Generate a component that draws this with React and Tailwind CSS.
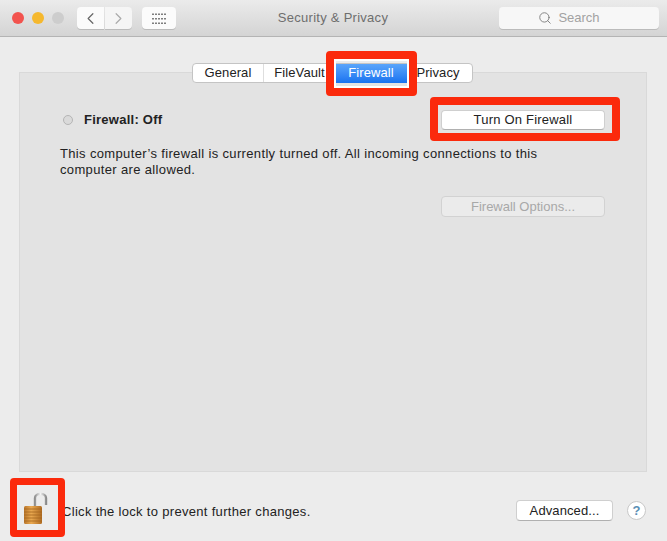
import { ChevronLeft, ChevronRight, Search } from 'lucide-react';

const tabs = ['General', 'FileVault', 'Firewall', 'Privacy'];

// little grid-of-dots icon for the "show all" button
const GridIcon = () => (
  <svg width="15" height="11" viewBox="0 0 15 11" fill="#555">
    {[1, 5.5, 10].map((y) =>
      [1, 4, 7, 10, 13].map((x) => <rect key={`${x}-${y}`} x={x - 0.75} y={y - 0.5} width="1.5" height="1.5" />)
    )}
  </svg>
);

const LockIcon = () => (
  <svg width="26" height="34" viewBox="0 0 26 34" className="mr-[3px]">
    <defs>
      <linearGradient id="shackle" x1="0" x2="1" y1="0" y2="0">
        <stop offset="0" stopColor="#8f8f8f" />
        <stop offset="0.5" stopColor="#f2f2f2" />
        <stop offset="1" stopColor="#8a8a8a" />
      </linearGradient>
      <linearGradient id="body" x1="0" x2="1" y1="0" y2="0">
        <stop offset="0" stopColor="#b8752a" />
        <stop offset="0.4" stopColor="#eaa951" />
        <stop offset="1" stopColor="#b06c22" />
      </linearGradient>
    </defs>
    <path d="M12 15 V7 C12 1.5 23 1.5 23 7 V14" fill="none" stroke="url(#shackle)" strokeWidth="2.4" />
    <rect x="1" y="15" width="18" height="18" rx="1.5" fill="url(#body)" />
    {[18, 21, 24, 27, 30].map((y) => (
      <line key={y} x1="1" x2="19" y1={y} y2={y} stroke="#a3651f" strokeWidth="0.8" />
    ))}
  </svg>
);

export default function App() {
  return (
    <div className="relative w-[667px] h-[541px] overflow-hidden bg-[#ececec] text-[13px] text-[#222] font-['Liberation_Sans',sans-serif] flex flex-col">
      {/* Title bar */}
      <div className="h-[37px] shrink-0 flex items-center pl-[12px] pr-[8px] border-b border-[#b4b4b4] bg-gradient-to-b from-[#ebebeb] to-[#d4d4d4]">
        <div className="flex gap-[8px]">
          <span className="w-[12px] h-[12px] rounded-full bg-[#f2534e]" />
          <span className="w-[12px] h-[12px] rounded-full bg-[#f5b82e]" />
          <span className="w-[12px] h-[12px] rounded-full bg-[#cdcdcd]" />
        </div>
        <div className="flex gap-px ml-[13px]">
          <div className="w-[27px] h-[22px] rounded-l-[4px] bg-[#fbfbfb] shadow-[0_1px_0_#bbb] flex items-center justify-center">
            <ChevronLeft size={19} strokeWidth={1.5} className="text-[#666]" />
          </div>
          <div className="w-[27px] h-[22px] rounded-r-[4px] bg-[#f5f5f5] shadow-[0_1px_0_#bbb] flex items-center justify-center">
            <ChevronRight size={19} strokeWidth={1.5} className="text-[#aaa]" />
          </div>
        </div>
        <div className="w-[34px] h-[22px] ml-[10px] rounded-[4px] bg-[#fbfbfb] shadow-[0_1px_0_#bbb] flex items-center justify-center">
          <GridIcon />
        </div>
        <div className="flex-1 text-center text-[13px] tracking-[0.27px] text-[#6e6e6e] pr-[9px]">Security &amp; Privacy</div>
        <div className="w-[160px] h-[22px] rounded-[4px] bg-[#f7f7f7] shadow-[0_1px_0_#bbb] flex items-center justify-center gap-[6px] text-[#a2a2a2] pr-[20px]">
          <Search size={14} strokeWidth={1.5} className="text-[#777]" />
          <span>Search</span>
        </div>
      </div>

      {/* Tabs */}
      <div className="relative z-10 flex justify-center mt-[26px] -mb-[11px] pr-[2px]">
        <div className="flex h-[20px] rounded-[4px] bg-white border border-[#c4c4c4] items-center tracking-[0.08px]">
          {tabs.map((tab, i) => (
            <div
              key={tab}
              className={
                tab === 'Firewall'
                  ? 'w-[72px] h-[19px] flex items-center justify-center text-white bg-gradient-to-b from-[#5aa5fb] to-[#1672f0]'
                  : `h-full flex items-center justify-center ${i === 0 ? 'w-[71px] border-r border-[#dedede]' : i === 1 ? 'w-[71px]' : 'w-[65px] pr-[3px]'}`
              }
            >
              {tab}
            </div>
          ))}
        </div>
      </div>

      {/* Panel */}
      <div className="mx-[19px] mr-[20px] h-[400px] shrink-0 bg-[#e3e3e3] border border-[#d9d9d9] pt-[37px] px-[40px]">
        <div className="flex items-center justify-between h-[20px] pr-[1px]">
          <div className="flex items-center">
            <span className="w-[10px] h-[10px] ml-[3px] rounded-full border border-[#b5b5b5] bg-[#dadada]" />
            <span className="ml-[11px] font-bold tracking-[0.25px]">Firewall: Off</span>
          </div>
          <button className="w-[164px] h-[20px] rounded-[4px] bg-white border border-[#cfcfcf] border-b-[#b0b0b0] tracking-[0.2px] flex items-center justify-center">
            Turn On Firewall
          </button>
        </div>
        <p className="mt-[16px] leading-[16px] w-[490px] tracking-[0.35px]">
          This computer’s firewall is currently turned off. All incoming connections to this computer are allowed.
        </p>
        <div className="flex justify-end mt-[18px] pr-[1px]">
          <button className="w-[164px] h-[21px] rounded-[4px] bg-[#ebebeb] border border-[#d2d2d2] text-[#a8a8a8] flex items-center justify-center">
            Firewall Options...
          </button>
        </div>
      </div>

      {/* Footer */}
      <div className="flex items-center mt-[28px] pl-[62px] pr-[21px] h-[21px]">
        <span className="flex-1 pt-[2px] tracking-[0.31px]">Click the lock to prevent further changes.</span>
        <button className="w-[97px] h-[21px] rounded-[4px] bg-white border border-[#cfcfcf] border-b-[#b0b0b0] tracking-[0.1px] flex items-center justify-center">
          Advanced...
        </button>
        <span className="w-[19px] h-[19px] ml-[14px] rounded-full bg-white border border-[#c8c8c8] flex items-center justify-center text-[13px] font-bold text-[#5a8fb5]">
          ?
        </span>
      </div>

      {/* Lock inside the red annotation */}
      <div className="absolute left-[10px] top-[478px] w-[55px] h-[59px] rounded-[4px] border-[7px] border-[#fb2a0c] flex items-center justify-center">
        <LockIcon />
      </div>

      {/* Red annotations */}
      <div className="absolute z-20 left-[326px] top-[51px] w-[91px] h-[45px] rounded-[4px] border-[8px] border-[#fb2a0c] shadow-[inset_0_0_0_2px_#fff]" />
      <div className="absolute z-20 left-[430px] top-[97px] w-[190px] h-[44px] rounded-[4px] border-[8px] border-[#fb2a0c]" />
    </div>
  );
}
